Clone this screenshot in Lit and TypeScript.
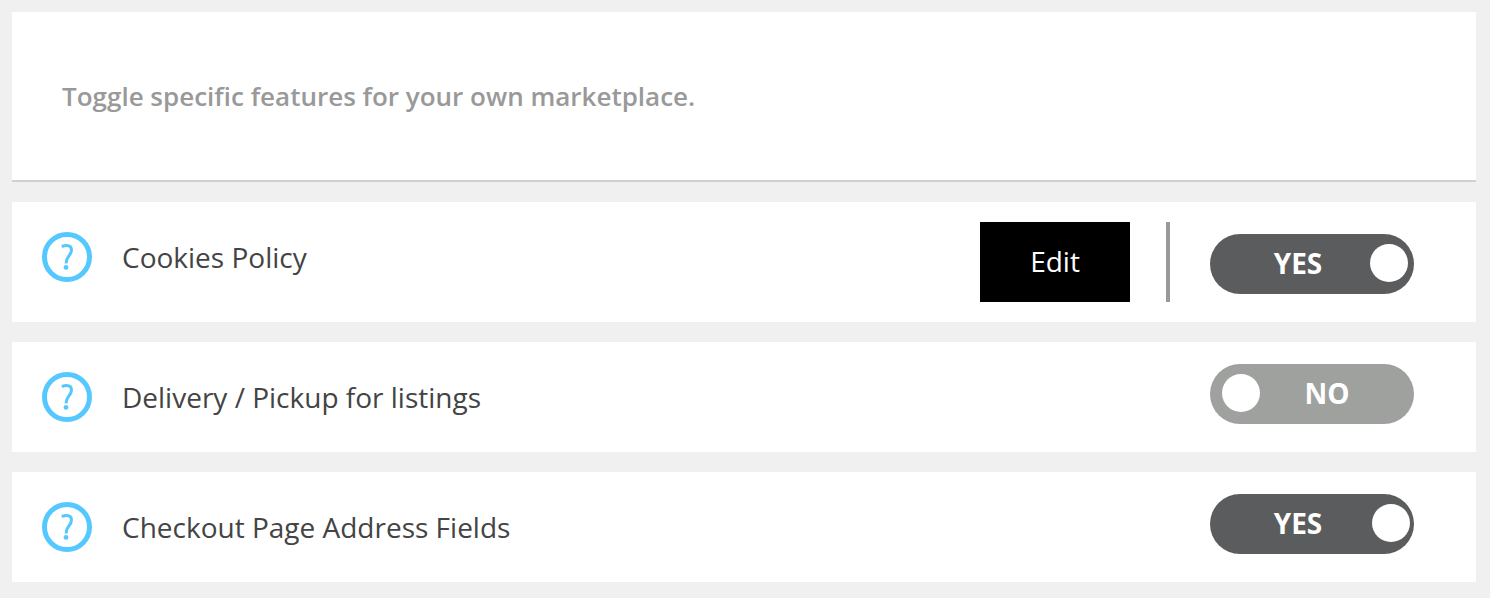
import { LitElement, html, css } from "lit";
import { customElement, property } from "lit/decorators.js";

@customElement("feature-row")
class FeatureRow extends LitElement {
  @property() label = "";
  @property({ type: Boolean }) on = false;
  @property({ type: Boolean }) editable = false;

  static styles = css`
    :host { display: block; background: #fff; }
    .row { display: flex; align-items: flex-start; padding: 20px 62px 20px 30px; }
    .name { display: flex; flex: 1; gap: 30px; padding: 10px 0; }
    .help { flex: none; width: 50px; height: 50px; padding: 0; border: 0; border-radius: 50%; background: none; color: #55c8ff; cursor: pointer; }
    .help svg { display: block; fill: none; stroke: currentColor; }
    .label { font-size: 28px; line-height: 50px; color: #444; }
    .edit { width: 150px; height: 80px; border: 0; padding: 0 0 2px; background: #000; color: #fff; font: 28px/40px "Open Sans", sans-serif; cursor: pointer; }
    .extra { display: flex; margin-right: 40px; border-right: 4px solid #999; padding-right: 36px; }
    .switch { position: relative; display: flex; align-items: center; box-sizing: border-box; width: 204px; height: 60px; margin-top: 2px; padding: 0 20px 2px 12px; border-radius: 30px; background: #9fa19f; color: #fff; font-size: 28px; line-height: 38px; font-weight: 700; }
    .switch.on { flex-direction: row-reverse; padding: 0 4px 2px 14px; background: #5b5c5e; }
    .editable .switch { margin-top: 12px; }
    .editable .switch.on { padding: 0 6px 2px 16px; }
    .switch input { position: absolute; inset: 0; width: 100%; height: 100%; margin: 0; opacity: 0; cursor: pointer; }
    .state { flex: 1; text-align: center; }
    .knob { width: 38px; height: 38px; border-radius: 50%; background: #fff; }
  `;

  render() {
    return html`<div class="row ${this.editable ? "editable" : ""}">
      <div class="name">
        <button class="help" aria-label="Help: ${this.label}">
          <svg width="50" height="50" viewBox="0 0 50 50" aria-hidden="true">
            <circle cx="25" cy="25" r="22.5" stroke-width="5" />
            <path d="M19.8 14.6C21.5 13.7 23 13.4 24.6 13.4C27.8 13.4 29.5 15.2 29.5 18C29.5 20.8 28.4 22.2 26.7 24.2C24.9 26.3 24.1 27.7 24.1 31.4" stroke-width="3" />
            <circle cx="24" cy="35.4" r="2.4" fill="currentColor" stroke="none" />
          </svg>
        </button>
        <label class="label" for="toggle">${this.label}</label>
      </div>
      ${this.editable ? html`<div class="extra"><button class="edit">Edit</button></div>` : ""}
      <div class="switch ${this.on ? "on" : ""}">
        <input id="toggle" type="checkbox" role="switch" .checked=${this.on}
          @change=${(e: Event) => (this.on = (e.target as HTMLInputElement).checked)} />
        <span class="knob"></span>
        <span class="state">${this.on ? "YES" : "NO"}</span>
      </div>
    </div>`;
  }
}

@customElement("app-root")
class AppRoot extends LitElement {
  static styles = css`
    :host { display: block; box-sizing: border-box; min-height: 100vh; padding: 12px 14px 16px 12px; background: #f0f0f0; font-family: "Open Sans", sans-serif; }
    main { display: flex; flex-direction: column; gap: 20px; }
    .intro { padding: 64px 50px; background: #fff; border-bottom: 2px solid #d0d0d0; }
    h1 { margin: 0; color: #999; font-size: 26px; line-height: 40px; font-weight: 600; }
  `;

  render() {
    return html`<main>
      <header class="intro"><h1>Toggle specific features for your own marketplace.</h1></header>
      <feature-row label="Cookies Policy" on editable></feature-row>
      <feature-row label="Delivery / Pickup for listings"></feature-row>
      <feature-row label="Checkout Page Address Fields" on></feature-row>
    </main>`;
  }
}
